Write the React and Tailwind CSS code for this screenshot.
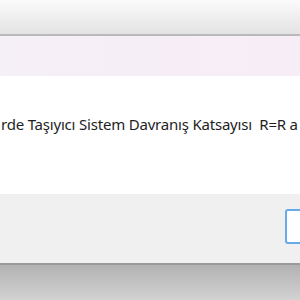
export default function App() {
  return (
    <div className="w-[300px] h-[300px] overflow-hidden flex flex-col bg-white">
      <div className="h-[34px] shrink-0 bg-gradient-to-b from-[#fbfbfb] to-[#e3e3e3]" />
      <div className="h-[2px] shrink-0 bg-[#b9b9b9]" />
      <div className="h-[40px] shrink-0 bg-gradient-to-r from-[#f5eff7] to-[#f7edf6]" />
      <div className="h-[118px] shrink-0 bg-white pt-[38px]">
        <div className="whitespace-pre text-[15px] leading-[20px] tracking-[-0.2px] text-[#1e1e1e] pl-[1px] font-['Noto_Sans',sans-serif]">rde Taşıyıcı Sistem Davranış Katsayısı  R=R a</div>
      </div>
      <div className="h-[69px] shrink-0 bg-[#f0f0f0] flex justify-end items-start pt-[15px]">
        <div className="w-[40px] h-[35px] mr-[-25px] bg-white border-2 border-[#66aae8] rounded-[3px]" />
      </div>
      <div className="h-[2px] shrink-0 bg-[#9a9a9a]" />
      <div className="flex-1 bg-gradient-to-b from-[#b2b2b2] to-[#d2d2d2]" />
    </div>
  );
}
